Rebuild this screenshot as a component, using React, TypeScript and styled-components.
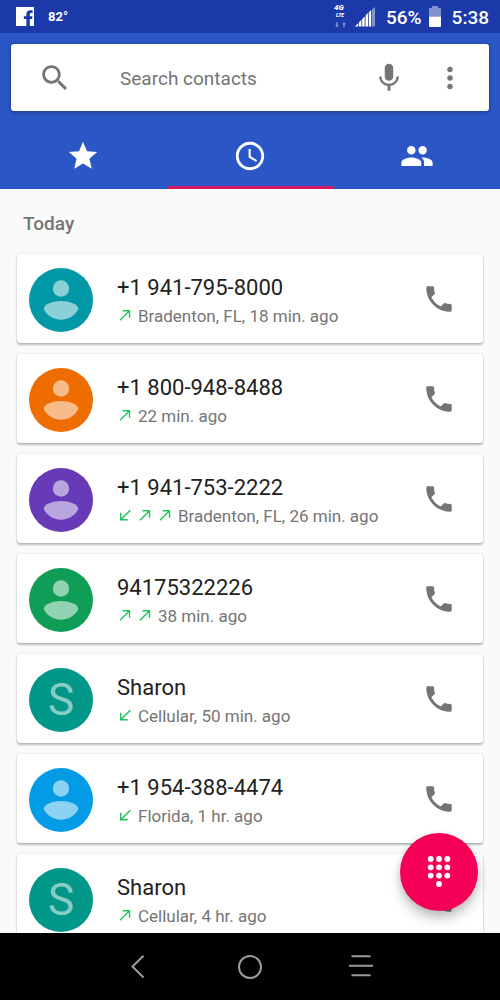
import React from "react";
import styled, { createGlobalStyle } from "styled-components";

const GlobalStyle = createGlobalStyle`
  *, *::before, *::after { box-sizing: border-box; }
  body {
    margin: 0;
    background: #fafafa;
    font-family: Roboto, "Liberation Sans", sans-serif;
    color: #212121;
  }
  button { border: 0; padding: 0; background: none; color: inherit; font: inherit; cursor: pointer; }
  svg { display: block; }
`;

const Shell = styled.div`
  display: flex;
  flex-direction: column;
  height: 100vh;
  overflow: hidden;
`;

const StatusBar = styled.div`
  display: flex;
  align-items: center;
  flex: none;
  height: 33px;
  padding: 0 11px 0 16px;
  background: #1b39a8;
  color: #fff;
`;

const Temperature = styled.span`
  margin: 0 auto 0 14px;
  font-size: 13px;
  line-height: 16px;
  font-weight: 700;
`;

const StatusIcons = styled.div`
  display: flex;
  align-items: center;
  gap: 8px;
  margin-right: 11px;
`;

const StatusText = styled.span`
  font-size: 19px;
  line-height: 24px;
  font-weight: 500;
  padding-top: 2px;
`;

const Battery = styled.span`
  margin: 0 11px 0 7px;
`;

const Header = styled.header`
  flex: none;
  padding-top: 11px;
  background: #2a56c6;
`;

const SearchBar = styled.form`
  display: flex;
  align-items: center;
  height: 67px;
  margin: 0 11px 11px;
  padding: 0 22px 0 27px;
  background: #fff;
  border-radius: 3px;
  box-shadow: 0 1px 4px rgba(0, 0, 0, 0.35);
  color: #757575;
`;

const SearchInput = styled.input`
  flex: 1;
  min-width: 0;
  margin: 0 12px 0 48px;
  padding: 2px 0 0;
  border: 0;
  outline: 0;
  background: none;
  font: 400 19px/24px Roboto, "Liberation Sans", sans-serif;
  color: #212121;
  &::placeholder { color: #757575; opacity: 1; }
`;

const BarButton = styled.button<{ $gap?: number }>`
  flex: none;
  margin-left: ${(p) => p.$gap ?? 0}px;
`;

const Tabs = styled.nav`
  display: flex;
`;

const Tab = styled.button<{ $active?: boolean }>`
  flex: 1;
  display: flex;
  justify-content: center;
  align-items: center;
  height: 67px;
  color: #fff;
  box-shadow: ${(p) => (p.$active ? "inset 0 -3px 0 #d8185f" : "none")};
`;

const Main = styled.main`
  position: relative;
  flex: 1;
  min-height: 0;
`;

const Scroller = styled.div`
  height: 100%;
  padding: 0 17px 22px;
  overflow-y: auto;
  scrollbar-width: none;
`;

const SectionTitle = styled.h2`
  margin: 0;
  padding: 23px 6px 18px;
  font-size: 19px;
  line-height: 24px;
  font-weight: 500;
  color: #757575;
`;

const CallList = styled.ul`
  display: flex;
  flex-direction: column;
  gap: 11px;
  margin: 0;
  padding: 0;
  list-style: none;
`;

const Card = styled.li`
  display: flex;
  align-items: center;
  height: 89px;
  padding: 0 27px 0 12px;
  background: #fff;
  border-radius: 3px;
  box-shadow: 0 0 2px rgba(0, 0, 0, 0.16), 0 2px 2px rgba(0, 0, 0, 0.24);
`;

const Avatar = styled.div<{ $color: string }>`
  flex: none;
  display: flex;
  align-items: center;
  justify-content: center;
  width: 64px;
  height: 64px;
  margin-top: 3px;
  border-radius: 50%;
  background: ${(p) => p.$color};
  color: rgba(255, 255, 255, 0.55);
  font-size: 44px;
  line-height: 64px;
`;

const Details = styled.div`
  flex: 1;
  min-width: 0;
  margin-left: 24px;
  padding-top: 6px;
`;

const Name = styled.div`
  font-size: 22px;
  line-height: 28px;
`;

const Meta = styled.div`
  display: flex;
  align-items: center;
  gap: 7px;
  padding-left: 1px;
  font-size: 17px;
  line-height: 28px;
  color: #757575;
  white-space: nowrap;
`;

const CallButton = styled.button`
  flex: none;
  color: #757575;
`;

const DialButton = styled.button`
  position: absolute;
  right: 22px;
  bottom: 22px;
  display: flex;
  align-items: center;
  justify-content: center;
  width: 78px;
  height: 78px;
  border-radius: 50%;
  background: #f50057;
  color: #fff;
  box-shadow: 0 8px 12px rgba(0, 0, 0, 0.22), 0 1px 6px rgba(0, 0, 0, 0.1);
`;

const SystemNav = styled.nav`
  flex: none;
  display: flex;
  justify-content: center;
  align-items: center;
  height: 67px;
  background: #000;
`;

const NavButton = styled.button`
  display: flex;
  justify-content: center;
  align-items: center;
  width: 111px;
  height: 67px;
  color: #9c9c9c;
`;

const PATHS = {
  search:
    "M15.5 14h-.79l-.28-.27C15.41 12.59 16 11.11 16 9.5 16 5.91 13.09 3 9.5 3S3 5.91 3 9.5 5.91 16 9.5 16c1.61 0 3.09-.59 4.23-1.57l.27.28v.79l5 4.99L20.49 19l-4.99-5zm-6 0C7.01 14 5 11.99 5 9.5S7.01 5 9.5 5 14 7.01 14 9.5 11.99 14 9.5 14z",
  mic: "M12 14c1.66 0 2.99-1.34 2.99-3L15 5c0-1.66-1.34-3-3-3S9 3.34 9 5v6c0 1.66 1.34 3 3 3zm5.3-3c0 3-2.54 5.1-5.3 5.1S6.7 14 6.7 11H5c0 3.41 2.72 6.23 6 6.72V21h2v-3.28c3.28-.48 6-3.3 6-6.72h-1.7z",
  more: "M12 8c1.1 0 2-.9 2-2s-.9-2-2-2-2 .9-2 2 .9 2 2 2zm0 2c-1.1 0-2 .9-2 2s.9 2 2 2 2-.9 2-2-.9-2-2-2zm0 6c-1.1 0-2 .9-2 2s.9 2 2 2 2-.9 2-2-.9-2-2-2z",
  star: "M12 17.27L18.18 21l-1.64-7.03L22 9.24l-7.19-.61L12 2 9.19 8.63 2 9.24l5.46 4.73L5.82 21z",
  clock:
    "M11.99 2C6.47 2 2 6.48 2 12s4.47 10 9.99 10C17.52 22 22 17.52 22 12S17.52 2 11.99 2zM12 20c-4.42 0-8-3.58-8-8s3.58-8 8-8 8 3.58 8 8-3.58 8-8 8zm.5-13H11v6l5.25 3.15.75-1.23-4.5-2.67z",
  people:
    "M16 11c1.66 0 2.99-1.34 2.99-3S17.66 5 16 5c-1.66 0-3 1.34-3 3s1.34 3 3 3zm-8 0c1.66 0 2.99-1.34 2.99-3S9.66 5 8 5C6.34 5 5 6.34 5 8s1.34 3 3 3zm0 2c-2.33 0-7 1.17-7 3.5V19h14v-2.5c0-2.33-4.67-3.5-7-3.5zm8 0c-.29 0-.62.02-.97.05 1.16.84 1.97 1.97 1.97 3.45V19h6v-2.5c0-2.33-4.67-3.5-7-3.5z",
  phone:
    "M6.62 10.79c1.44 2.83 3.76 5.14 6.59 6.59l2.2-2.2c.27-.27.67-.36 1.02-.24 1.12.37 2.33.57 3.57.57.55 0 1 .45 1 1V20c0 .55-.45 1-1 1-9.39 0-17-7.61-17-17 0-.55.45-1 1-1h3.5c.55 0 1 .45 1 1 0 1.25.2 2.45.57 3.57.11.35.03.74-.25 1.02l-2.2 2.2z",
};

const Icon = ({ name }: { name: keyof typeof PATHS }) => (
  <svg width="34" height="34" viewBox="0 0 24 24" fill="currentColor" aria-hidden="true">
    <path d={PATHS[name]} />
  </svg>
);

const PersonIcon = () => (
  <svg width="64" height="64" viewBox="0 0 64 64" fill="currentColor" aria-hidden="true">
    <circle cx="32" cy="20.500" r="8.200" />
    <path d="M14.700 41C14.700 36.200 24 33 32 33s17.300 3.200 17.300 8C46.500 47 40 51.700 32 51.700S17.500 47 14.700 41z" />
  </svg>
);

type Direction = "in" | "out";

const Arrow = ({ direction }: { direction: Direction }) => (
  <svg
    width="13"
    height="13"
    viewBox="0 0 13 13"
    fill="none"
    stroke="#1fc25b"
    strokeWidth="1.400"
    role="img"
    aria-label={direction === "out" ? "Outgoing call" : "Incoming call"}
  >
    <path d={direction === "out" ? "M2 11.200L11.500 1.700M4.500 1.700H11.500V8.700" : "M12.300 1.200L2.700 10.800M2.700 3.800V10.800H9.700"} />
  </svg>
);

interface Call {
  name: string;
  detail: string;
  color: string;
  calls: Direction[];
  initial?: string;
}

const CALLS: Call[] = [
  { name: "+1 941-795-8000", detail: "Bradenton, FL, 18 min. ago", color: "#0097a7", calls: ["out"] },
  { name: "+1 800-948-8488", detail: "22 min. ago", color: "#ef6c00", calls: ["out"] },
  { name: "+1 941-753-2222", detail: "Bradenton, FL, 26 min. ago", color: "#673ab7", calls: ["in", "out", "out"] },
  { name: "94175322226", detail: "38 min. ago", color: "#0f9d58", calls: ["out", "out"] },
  { name: "Sharon", detail: "Cellular, 50 min. ago", color: "#009688", calls: ["in"], initial: "S" },
  { name: "+1 954-388-4474", detail: "Florida, 1 hr. ago", color: "#039be5", calls: ["in"] },
  { name: "Sharon", detail: "Cellular, 4 hr. ago", color: "#009688", calls: ["out"], initial: "S" },
];

const CallCard = ({ call }: { call: Call }) => (
  <Card>
    <Avatar $color={call.color}>{call.initial ?? <PersonIcon />}</Avatar>
    <Details>
      <Name>{call.name}</Name>
      <Meta>
        {call.calls.map((direction, i) => (
          <Arrow key={i} direction={direction} />
        ))}
        <span>{call.detail}</span>
      </Meta>
    </Details>
    <CallButton aria-label={`Call ${call.name}`}>
      <Icon name="phone" />
    </CallButton>
  </Card>
);

const FacebookIcon = () => (
  <svg width="18" height="19" viewBox="0 0 18 19" aria-hidden="true">
    <path
      fill="#fff"
      d="M0 0h18v19h-4.200v-7h2.300l.4-2.800h-2.700V7.500c0-1 .4-1.500 1.500-1.500h1.300V3.200h-2.200c-2.600 0-4 1.500-4 3.900v2.100H7.800V12h2.600v7H0z"
    />
  </svg>
);

const NetworkIcon = () => (
  <svg width="13" height="25" viewBox="0 0 13 25" fill="#fff" aria-hidden="true">
    <text x="0" y="6" fontSize="8" fontWeight="900" fontStyle="italic">4G</text>
    <text x="2" y="13" fontSize="5" fontWeight="900" fontStyle="italic">LTE</text>
    <path opacity="0.450" d="M2.300 18h1.400v3H5l-2 2.500L1 21h1.300zM9.300 23.500h1.400v-3H12L10 18l-2 2.500h1.300z" />
  </svg>
);

const SignalIcon = () => (
  <svg width="20" height="20" viewBox="0 0 20 20" fill="#fff" aria-hidden="true">
    <path d="M0 19.500L3.200 16v3.500zM3.900 15.300L6.400 12.700v6.800H3.900zM7.200 11.900L9.700 9.400v10.100H7.200zM10.500 8.600L13 6.100v13.400h-2.500zM13.800 5.300L16.200 2.900v16.600h-2.400z" />
    <path opacity="0.450" d="M17 2.500L20 0v19.500h-3z" />
  </svg>
);

const BatteryIcon = () => (
  <svg width="12" height="21" viewBox="0 0 12 21" fill="#fff" aria-hidden="true">
    <path opacity="0.450" d="M3 0h6v2h3v8.500H0V2h3z" />
    <path d="M0 10.500h12V20a1 1 0 0 1-1 1H1a1 1 0 0 1-1-1z" />
  </svg>
);

const DialpadIcon = () => (
  <svg width="24" height="32" viewBox="0 0 24 32" fill="currentColor" aria-hidden="true">
    {[3, 11.3, 19.6].map((y) => [3.7, 12, 20.3].map((x) => <circle key={`${x}-${y}`} cx={x} cy={y} r="2.900" />))}
    <circle cx="12" cy="28" r="2.900" />
  </svg>
);

const App = () => (
  <Shell>
    <GlobalStyle />
    <StatusBar>
      <FacebookIcon />
      <Temperature>82°</Temperature>
      <StatusIcons>
        <NetworkIcon />
        <SignalIcon />
      </StatusIcons>
      <StatusText>56%</StatusText>
      <Battery>
        <BatteryIcon />
      </Battery>
      <StatusText>5:38</StatusText>
    </StatusBar>
    <Header>
      <SearchBar role="search" onSubmit={(e) => e.preventDefault()}>
        <BarButton type="submit" aria-label="Search">
          <Icon name="search" />
        </BarButton>
        <SearchInput type="text" aria-label="Search contacts" placeholder="Search contacts" />
        <BarButton type="button" aria-label="Voice search">
          <Icon name="mic" />
        </BarButton>
        <BarButton type="button" aria-label="More options" $gap={27}>
          <Icon name="more" />
        </BarButton>
      </SearchBar>
      <Tabs>
        <Tab aria-label="Favorites">
          <Icon name="star" />
        </Tab>
        <Tab aria-label="Recents" aria-current="page" $active>
          <Icon name="clock" />
        </Tab>
        <Tab aria-label="Contacts">
          <Icon name="people" />
        </Tab>
      </Tabs>
    </Header>
    <Main>
      <Scroller>
        <SectionTitle>Today</SectionTitle>
        <CallList>
          {CALLS.map((call, i) => (
            <CallCard key={i} call={call} />
          ))}
        </CallList>
      </Scroller>
      <DialButton aria-label="Open dial pad">
        <DialpadIcon />
      </DialButton>
    </Main>
    <SystemNav>
      <NavButton aria-label="Back">
        <svg width="24" height="24" viewBox="0 0 24 24" fill="none" stroke="currentColor" strokeWidth="2">
          <path d="M16.500 .7L5.500 11.500l11 11" />
        </svg>
      </NavButton>
      <NavButton aria-label="Home">
        <svg width="24" height="24" viewBox="0 0 24 24" fill="none" stroke="currentColor" strokeWidth="2">
          <circle cx="12" cy="12" r="11" />
        </svg>
      </NavButton>
      <NavButton aria-label="Menu">
        <svg width="24" height="24" viewBox="0 0 24 24" fill="none" stroke="currentColor" strokeWidth="2">
          <path d="M2.500 1.200h19M0 10.800h24M2.500 20.300h19" />
        </svg>
      </NavButton>
    </SystemNav>
  </Shell>
);

export default App;
